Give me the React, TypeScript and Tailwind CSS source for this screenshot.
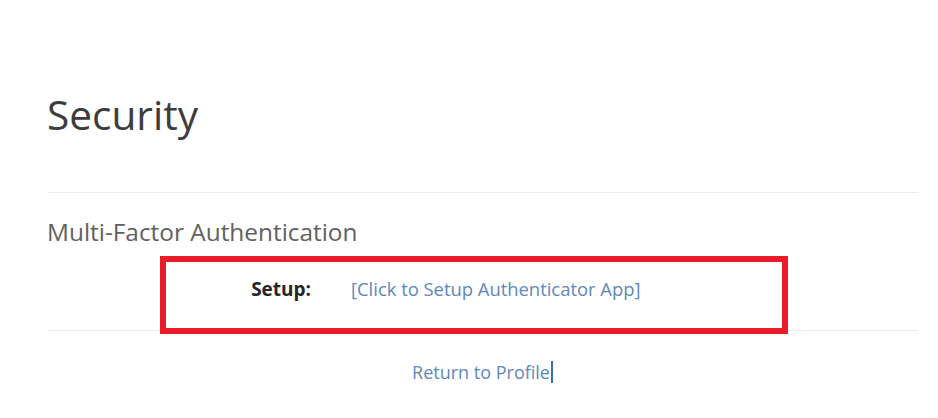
export default function App() {
  return (
    <div
      className="w-[938px] h-[418px] bg-white overflow-hidden pl-[47px] pr-[20px]"
      style={{ fontFamily: '"Open Sans", "Liberation Sans", sans-serif' }}
    >
      <h1 className="mt-[87px] h-[56px] text-[40.6px] leading-[56px] text-[#3d3d3d] font-normal">
        Security
      </h1>
      <hr className="mt-[49px] border-0 border-t border-[#ebebeb]" />

      <h2 className="mt-[23px] h-[32px] text-[24.4px] leading-[32px] text-[#616161] font-normal">
        Multi-Factor Authentication
      </h2>

      <div className="relative mt-[28px] h-[26px] flex items-baseline leading-[26px]">
        <div className="w-[264px] text-right text-[19px] font-bold text-[#262626]">Setup:</div>
        <a href="#" className="ml-[40px] text-[18.4px] text-[#6088bb]">
          [Click to Setup Authenticator App]
        </a>
        {/* annotation frame */}
        <div className="absolute left-[113px] top-[-20px] w-[628px] h-[78px] border-[6px] border-[#ea1c27]" />
      </div>

      <hr className="mt-[28px] border-0 border-t border-[#ebebeb]" />

      <div className="mt-[29px] h-[24px] flex justify-center text-[18px] leading-[24px]">
        <a href="#" className="text-[#6088bb]">
          Return to Profile
        </a>
        <span className="ml-px mt-[1px] w-[2px] h-[22px] bg-[#2f6db5]" />
      </div>
    </div>
  );
}
